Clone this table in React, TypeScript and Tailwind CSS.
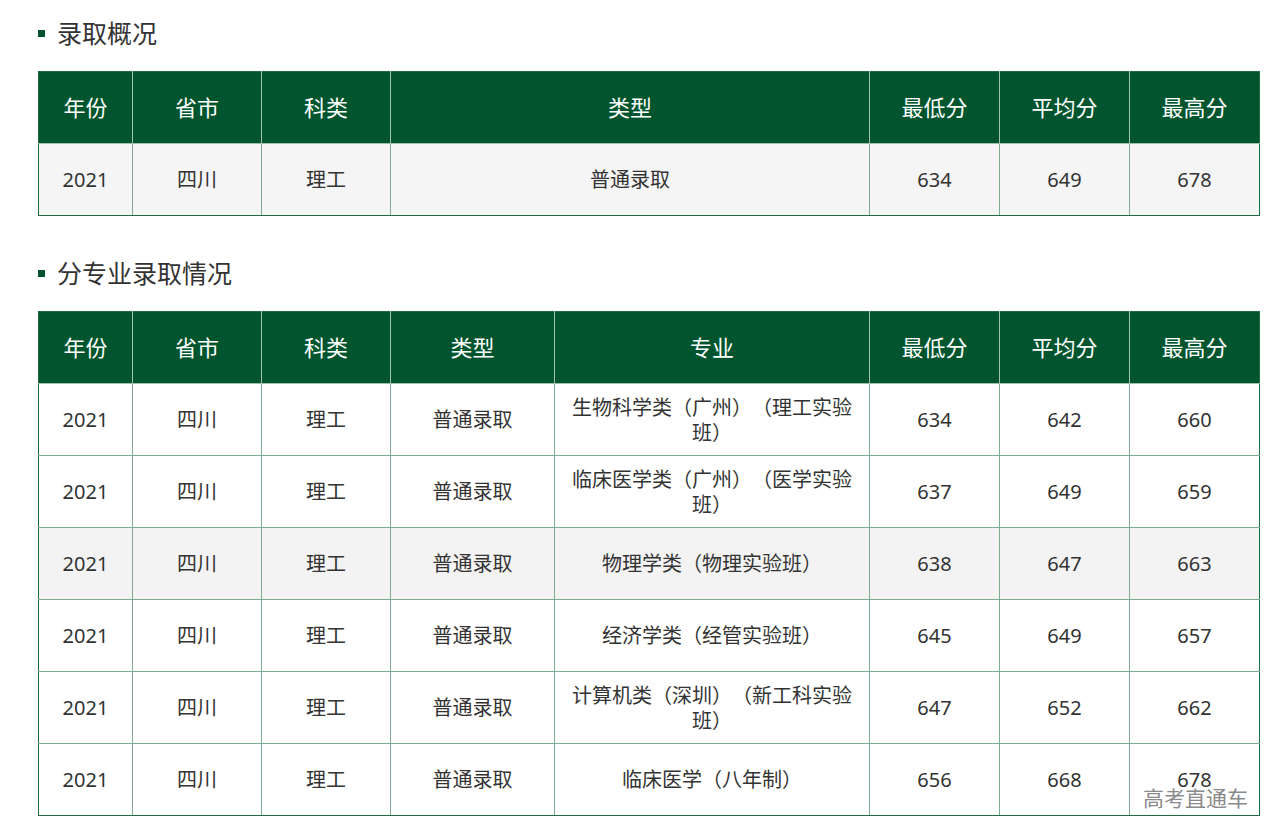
const summaryHead = ["年份", "省市", "科类", "类型", "最低分", "平均分", "最高分"];
const summaryCols = ["w-[94px]", "w-[129px]", "w-[129px]", "w-[479px]", "w-[130px]", "w-[130px]", "w-[130px]"];

const majorHead = ["年份", "省市", "科类", "类型", "专业", "最低分", "平均分", "最高分"];
const majorCols = ["w-[94px]", "w-[129px]", "w-[129px]", "w-[164px]", "w-[315px]", "w-[130px]", "w-[130px]", "w-[130px]"];

const majors = [
  { name: "生物科学类（广州）（理工实验班）", min: 634, avg: 642, max: 660 },
  { name: "临床医学类（广州）（医学实验班）", min: 637, avg: 649, max: 659 },
  { name: "物理学类（物理实验班）", min: 638, avg: 647, max: 663, hover: true },
  { name: "经济学类（经管实验班）", min: 645, avg: 649, max: 657 },
  { name: "计算机类（深圳）（新工科实验班）", min: 647, avg: 652, max: 662 },
  { name: "临床医学（八年制）", min: 656, avg: 668, max: 678 },
];

function Title({ children }: { children: string }) {
  return (
    <div className="flex h-[30px] items-center gap-[12px]">
      <span className="h-[7px] w-[7px] bg-[#00552e]" />
      <span className="text-[25px] leading-[30px] text-[#333]">{children}</span>
    </div>
  );
}

function Head({ labels }: { labels: string[] }) {
  return (
    <thead>
      <tr className="h-[72px] bg-[#00552e]">
        {labels.map((l) => (
          <th
            key={l}
            className="border border-[#9fc3ad] border-t-[#1d6b42] text-center text-[22px] font-normal text-white first:border-l-[#1d6b42] last:border-r-[#1d6b42]"
          >
            {l}
          </th>
        ))}
      </tr>
    </thead>
  );
}

const td =
  "border border-[#7eab90] px-[16px] text-center text-[20px] leading-[25px] text-[#333] [text-spacing-trim:space-all] first:border-l-[#1d6b42] last:border-r-[#1d6b42]";
const tdLast = td + " border-b-[#1d6b42]";

export default function App() {
  return (
    <main
      className="relative min-h-[838px] bg-white pl-[38px] pt-[18px]"
      style={{ fontFamily: '"Noto Sans", "Noto Sans CJK SC", sans-serif' }}
    >
      <Title>录取概况</Title>
      <table className="mt-[23px] w-[1222px] table-fixed border-collapse">
        <colgroup>
          {summaryCols.map((c, i) => (
            <col key={i} className={c} />
          ))}
        </colgroup>
        <Head labels={summaryHead} />
        <tbody>
          <tr className="h-[72px] bg-[#f5f5f5]">
            {["2021", "四川", "理工", "普通录取", "634", "649", "678"].map((v, i) => (
              <td key={i} className={tdLast}>
                {v}
              </td>
            ))}
          </tr>
        </tbody>
      </table>

      <div className="mt-[42px]">
        <Title>分专业录取情况</Title>
      </div>
      <table className="mt-[23px] w-[1222px] table-fixed border-collapse">
        <colgroup>
          {majorCols.map((c, i) => (
            <col key={i} className={c} />
          ))}
        </colgroup>
        <Head labels={majorHead} />
        <tbody>
          {majors.map((m, idx) => {
            const c = idx === majors.length - 1 ? tdLast : td;
            return (
              <tr key={m.name} className={m.hover ? "h-[72px] bg-[#f3f3f3]" : "h-[72px] bg-white"}>
                <td className={c}>2021</td>
                <td className={c}>四川</td>
                <td className={c}>理工</td>
                <td className={c}>普通录取</td>
                <td className={c}>{m.name}</td>
                <td className={c}>{m.min}</td>
                <td className={c}>{m.avg}</td>
                <td className={c}>{m.max}</td>
              </tr>
            );
          })}
        </tbody>
      </table>

      <div className="absolute left-[1143px] top-[785px] text-[21px] leading-[26px] text-[#8a8a8a] [text-shadow:0_0_2px_#fff]">
        高考直通车
      </div>
    </main>
  );
}
